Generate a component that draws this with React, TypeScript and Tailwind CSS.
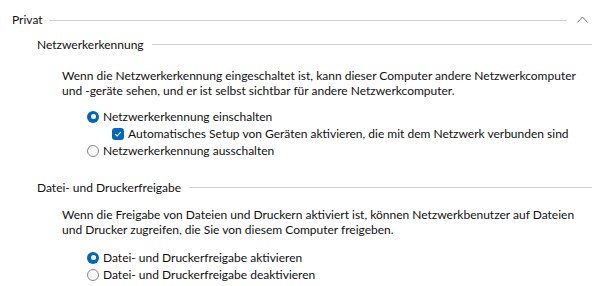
import React from 'react'

function Radio({ checked }: { checked?: boolean }) {
  if (checked) {
    return (
      <span className="flex items-center justify-center w-[12px] h-[12px] rounded-full bg-[#0067c0] shrink-0">
        <span className="w-[5px] h-[5px] rounded-full bg-white" />
      </span>
    )
  }
  return <span className="w-[12px] h-[12px] rounded-full border border-[#8a8a8a] bg-[#f7f7f7] shrink-0" />
}

function Check() {
  return (
    <span className="flex items-center justify-center w-[12px] h-[12px] rounded-[3px] bg-[#0067c0] shrink-0">
      <svg width="8" height="8" viewBox="0 0 8 8" fill="none">
        <path d="M1.2 4.2 L3.1 6 L6.8 2" stroke="white" strokeWidth="1.1" />
      </svg>
    </span>
  )
}

function Heading({ title }: { title: string }) {
  return (
    <div className="flex items-center h-[20px] pl-[25px]">
      <span>{title}</span>
      <span className="flex-1 h-px bg-[#cfcfcf] ml-[8px]" />
    </div>
  )
}

function Option({ label, checked }: { label: string; checked?: boolean }) {
  return (
    <div className="flex items-center gap-[4px] h-[17px] pl-[75px]">
      <Radio checked={checked} />
      <span>{label}</span>
    </div>
  )
}

export default function App() {
  return (
    <div
      className="w-[610px] h-[286px] bg-white text-[#111] text-[12px] leading-[15px] pl-[12px] pr-[18px] pt-[8px] overflow-hidden whitespace-nowrap"
      style={{ fontFamily: 'Lato, sans-serif' }}
    >
      {/* Privat */}
      <div className="flex items-center h-[22px]">
        <span>Privat</span>
        <span className="flex-1 h-px bg-[#cfcfcf] ml-[6px] mt-[2px]" />
        <svg className="ml-[10px] mr-[4px]" width="11" height="7" viewBox="0 0 11 7" fill="none">
          <path d="M0.5 6.5 L5.5 1 L10.5 6.5" stroke="#7a7a7a" strokeWidth="1" />
        </svg>
      </div>

      <div className="mt-[4px]">
        <Heading title="Netzwerkerkennung" />
      </div>

      <p className="pl-[50px] mt-[14px]">
        Wenn die Netzwerkerkennung eingeschaltet ist, kann dieser Computer andere Netzwerkcomputer
        <br />
        und -geräte sehen, und er ist selbst sichtbar für andere Netzwerkcomputer.
      </p>

      <div className="mt-[10px]">
        <Option label="Netzwerkerkennung einschalten" checked />
        <div className="flex items-center gap-[4px] h-[17px] pl-[100px]">
          <Check />
          <span>Automatisches Setup von Geräten aktivieren, die mit dem Netzwerk verbunden sind</span>
        </div>
        <Option label="Netzwerkerkennung ausschalten" />
      </div>

      <div className="mt-[18px]">
        <Heading title="Datei- und Druckerfreigabe" />
      </div>

      <p className="pl-[50px] mt-[10px]">
        Wenn die Freigabe von Dateien und Druckern aktiviert ist, können Netzwerkbenutzer auf Dateien
        <br />
        und Drucker zugreifen, die Sie von diesem Computer freigeben.
      </p>

      <div className="mt-[12px]">
        <Option label="Datei- und Druckerfreigabe aktivieren" checked />
        <Option label="Datei- und Druckerfreigabe deaktivieren" />
      </div>
    </div>
  )
}
